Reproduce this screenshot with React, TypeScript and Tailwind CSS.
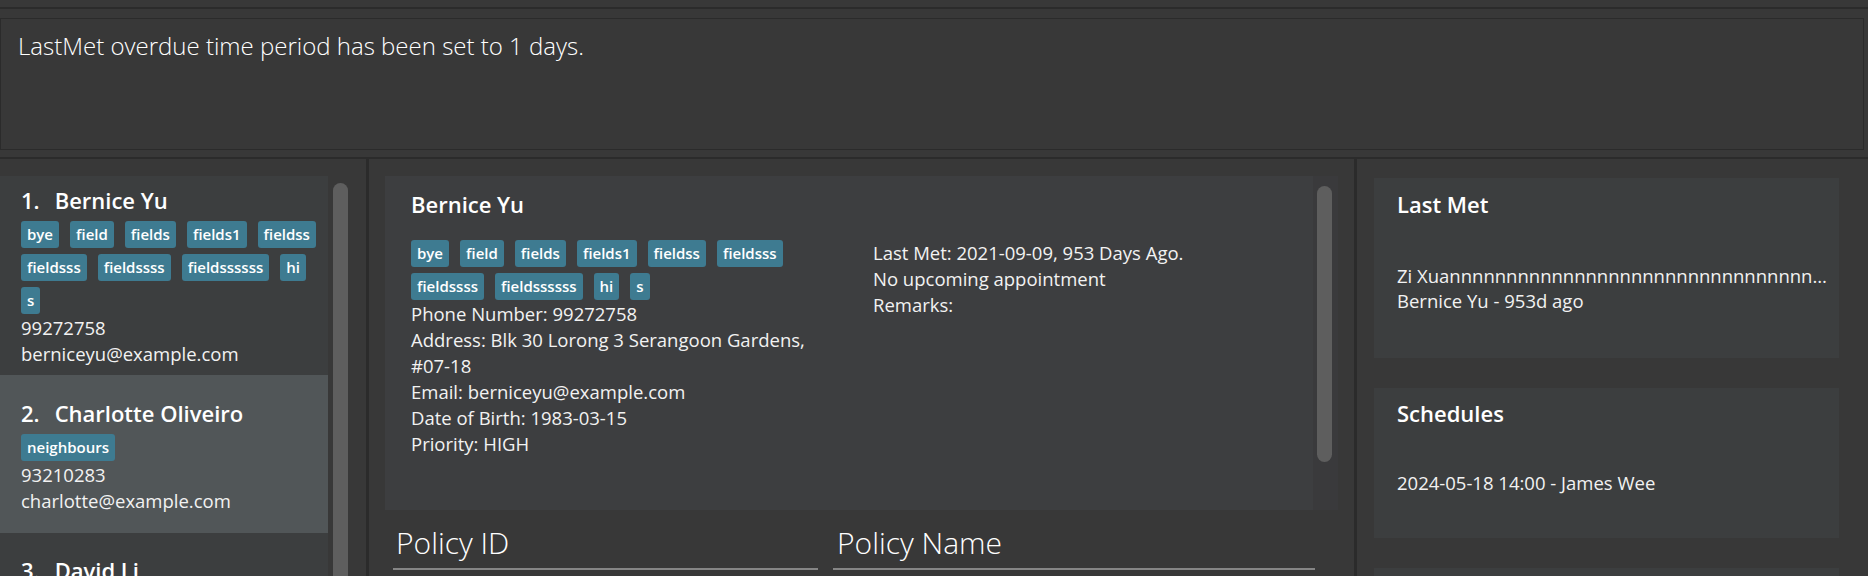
import React from "react";

const font = "font-['Open_Sans','Noto_Sans',sans-serif]";

const Tag = ({ label }: { label: string }) => (
  <span className="h-[27px] rounded-[3px] bg-[#3e7b91] px-[6px] text-[15px] font-semibold leading-[27px] text-white">
    {label}
  </span>
);

const manyTags = ["bye", "field", "fields", "fields1", "fieldss", "fieldsss", "fieldssss", "fieldssssss", "hi", "s"];

interface CardProps {
  index: number;
  name: string;
  tags: string[];
  phone: string;
  email: string;
  selected?: boolean;
  className?: string;
}

const PersonCard = ({ index, name, tags, phone, email, selected, className }: CardProps) => (
  <div className={`${selected ? "bg-[#515658]" : "bg-[#3c3e3f]"} pl-[21px] ${className ?? ""}`}>
    <div className="flex text-[22px] font-semibold leading-[30px] text-white">
      <span className="mr-[15px]">{index}.</span>
      <span>{name}</span>
    </div>
    {tags.length > 0 && (
      <div className="mt-[6px] flex w-[300px] flex-wrap gap-x-[11px] gap-y-[6px]">
        {tags.map((t) => (
          <Tag key={t} label={t} />
        ))}
      </div>
    )}
    <div className="mt-[1px] text-[18.5px] leading-[26px] text-[#f2f2f2]">
      <div>{phone}</div>
      <div>{email}</div>
    </div>
  </div>
);

export default function App() {
  return (
    <div className={`h-[576px] w-[1868px] overflow-hidden bg-[#383838] ${font}`}>
      <div className="h-[7px]" />
      <div className="h-[2px] bg-[#2b2b2b]" />
      <div className="h-[9px]" />
      <div className="mr-[4px] h-[132px] border border-[#2b2b2b] pl-[17px] pt-[11px] text-[24px] font-light leading-[32px] text-white">
        LastMet overdue time period has been set to 1 days.
      </div>
      <div className="h-[7px]" />
      <div className="h-[2px] bg-[#2b2b2b]" />

      <div className="flex h-[417px]">
        {/* person list */}
        <div className="flex w-[366px] pt-[17px]">
          <div className="w-[328px]">
            <PersonCard index={1} name="Bernice Yu" tags={manyTags} phone="99272758" email="berniceyu@example.com" className="pt-[9px] pb-[8px]" />
            <PersonCard
              index={2}
              name="Charlotte Oliveiro"
              tags={["neighbours"]}
              phone="93210283"
              email="charlotte@example.com"
              selected
              className="pt-[23px] pb-[19px]"
            />
            <PersonCard index={3} name="David Li" tags={["family"]} phone="87438807" email="lidavid@example.com" className="pt-[22px] pb-[19px]" />
          </div>
          <div className="ml-[5px] pt-[7px]">
            <div className="h-[500px] w-[15px] rounded-full bg-[#5e5e5e]" />
          </div>
        </div>

        <div className="w-[3px] bg-[#2b2b2b]" />

        {/* person detail */}
        <div className="w-[985px] pt-[17px]">
          <div className="ml-[16px] flex h-[334px] w-[953px] bg-[#3d3e40]">
            <div className="flex-1 pl-[26px] pt-[13px]">
              <div className="text-[22px] font-semibold leading-[30px] text-white">Bernice Yu</div>
              <div className="mt-[21px] flex gap-x-[48px]">
                <div className="w-[414px]">
                  <div className="flex flex-wrap gap-x-[11px] gap-y-[6px]">
                    {manyTags.map((t) => (
                      <Tag key={t} label={t} />
                    ))}
                  </div>
                  <div className="mt-[1px] text-[18.5px] leading-[26px] text-[#f2f2f2]">
                    <div>Phone Number: 99272758</div>
                    <div>Address: Blk 30 Lorong 3 Serangoon Gardens, #07-18</div>
                    <div>Email: berniceyu@example.com</div>
                    <div>Date of Birth: 1983-03-15</div>
                    <div>Priority: HIGH</div>
                  </div>
                </div>
                <div className="text-[18.5px] leading-[26px] text-[#f2f2f2]">
                  <div>Last Met: 2021-09-09, 953 Days Ago.</div>
                  <div>No upcoming appointment</div>
                  <div>Remarks:</div>
                </div>
              </div>
            </div>
            <div className="w-[25px] bg-[#3a3a3c] pl-[4px] pt-[10px]">
              <div className="h-[276px] w-[15px] rounded-full bg-[#5e5e5e]" />
            </div>
          </div>

          <div className="ml-[24px] mt-[15px] flex w-[922px] gap-x-[15px] text-[30px] font-light leading-[36px] text-white">
            <div className="w-[425px] border-b-2 border-[#858585] pb-[7px] pl-[3px]">Policy ID</div>
            <div className="flex-1 border-b-2 border-[#858585] pb-[7px] pl-[4px]">Policy Name</div>
          </div>
        </div>

        <div className="w-[3px] bg-[#2b2b2b]" />

        {/* reminders */}
        <div className="w-[511px] pl-[17px] pt-[19px]">
          <div className="flex w-[465px] flex-col gap-y-[30px]">
            <div className="h-[180px] bg-[#3c3e3f] pl-[23px] pt-[11px]">
              <div className="text-[22px] font-semibold leading-[30px] text-white">Last Met</div>
              <div className="mt-[44px] text-[18.5px] leading-[25px] text-[#f2f2f2]">
                <div className="w-[430px] truncate">Zi Xuannnnnnnnnnnnnnnnnnnnnnnnnnnnnnnnnnnnnnnnnnnnnnnnnnnn</div>
                <div>Bernice Yu - 953d ago</div>
              </div>
            </div>
            <div className="h-[150px] bg-[#3c3e3f] pl-[23px] pt-[10px]">
              <div className="text-[22px] font-semibold leading-[30px] text-white">Schedules</div>
              <div className="mt-[42px] text-[18.5px] leading-[26px] text-[#f2f2f2]">
                <div>2024-05-18 14:00 - James Wee</div>
              </div>
            </div>
            <div className="h-[150px] bg-[#3c3e3f]" />
          </div>
        </div>
      </div>
    </div>
  );
}
